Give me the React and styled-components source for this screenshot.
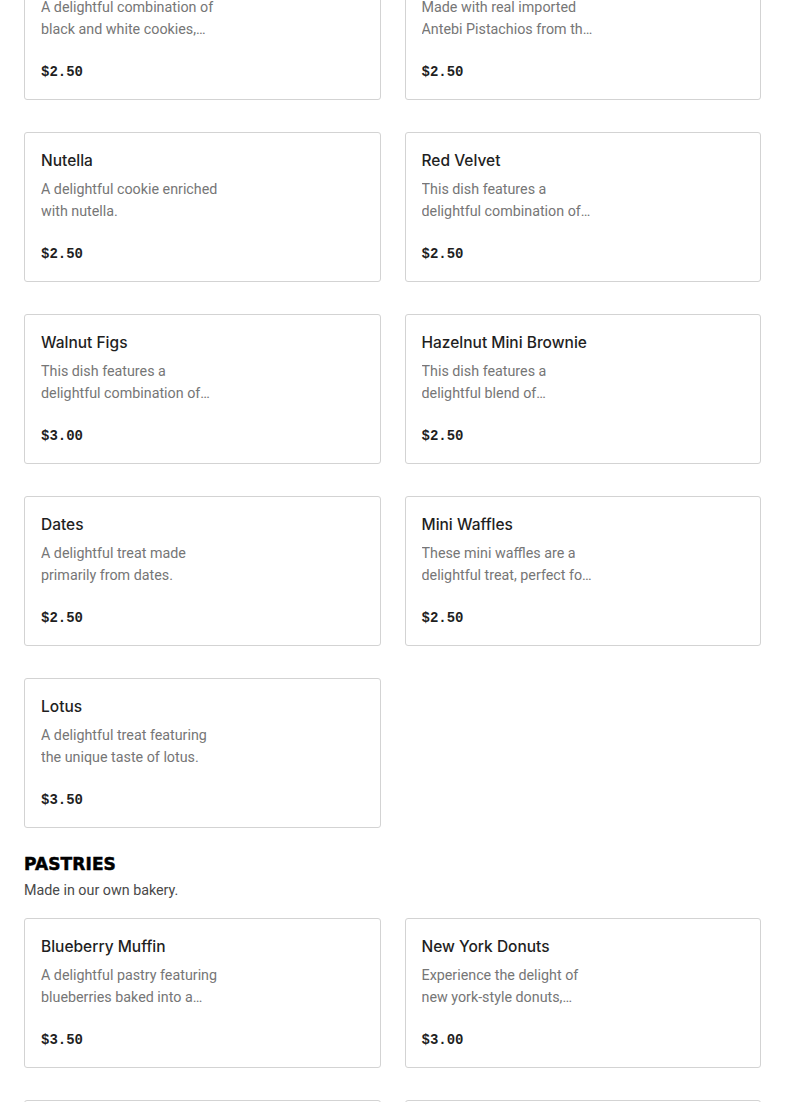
import React from 'react';
import styled, { createGlobalStyle } from 'styled-components';

const GlobalStyle = createGlobalStyle`
  body {
    margin: 0;
    background: #ffffff;
    font-family: Roboto, "Liberation Sans", sans-serif;
    overflow: hidden;
  }
`;

const Page = styled.div`
  padding: 0 24px;
  margin-top: -50px;
`;

const Grid = styled.div`
  display: grid;
  grid-template-columns: 1fr 1fr;
  column-gap: 24px;
  row-gap: 32px;
`;

const Section = styled.section`
  margin-top: ${(p) => p.gap || 0}px;
`;

const SectionTitle = styled.h2`
  margin: 0;
  font-family: "DejaVu Sans", sans-serif;
  font-weight: 700;
  font-size: 17px;
  line-height: 24px;
  color: #000;
  letter-spacing: 0.1px;
  -webkit-text-stroke: 0.5px #000;
`;

const SectionSub = styled.p`
  margin: 4px 0 18px;
  font-size: 14.3px;
  line-height: 20px;
  color: #494949;
`;

const Card = styled.div`
  box-sizing: border-box;
  height: 150px;
  border: 1px solid #d3d3d3;
  border-radius: 3px;
  padding: 16px 16px 17px;
  display: flex;
  flex-direction: column;
`;

const Title = styled.div`
  font-family: Inter, "Liberation Sans", sans-serif;
  font-size: 15.5px;
  line-height: 24px;
  font-weight: 500;
  color: #1f1f1f;
`;

const Desc = styled.div`
  margin-top: 5px;
  max-width: 180px;
  font-size: 14.3px;
  line-height: 22px;
  color: #767676;
  display: -webkit-box;
  -webkit-line-clamp: 2;
  -webkit-box-orient: vertical;
  overflow: hidden;
`;

const Price = styled.div`
  margin-top: auto;
  font-family: "Liberation Mono", monospace;
  font-weight: 700;
  font-size: 14px;
  line-height: 20px;
  color: #1f1f1f;
`;

const cookies = [
  { name: 'Black & White', desc: 'A delightful combination of black and white cookies,…', price: '$2.50' },
  { name: 'Pistachio', desc: 'Made with real imported Antebi Pistachios from th…', price: '$2.50' },
  { name: 'Nutella', desc: 'A delightful cookie enriched with nutella.', price: '$2.50' },
  { name: 'Red Velvet', desc: 'This dish features a delightful combination of…', price: '$2.50' },
  { name: 'Walnut Figs', desc: 'This dish features a delightful combination of…', price: '$3.00' },
  { name: 'Hazelnut Mini Brownie', desc: 'This dish features a delightful blend of…', price: '$2.50' },
  { name: 'Dates', desc: 'A delightful treat made primarily from dates.', price: '$2.50' },
  { name: 'Mini Waffles', desc: 'These mini waffles are a delightful treat, perfect fo…', price: '$2.50' },
  { name: 'Lotus', desc: 'A delightful treat featuring the unique taste of lotus.', price: '$3.50' },
];

const pastries = [
  { name: 'Blueberry Muffin', desc: 'A delightful pastry featuring blueberries baked into a…', price: '$3.50' },
  { name: 'New York Donuts', desc: 'Experience the delight of new york-style donuts,…', price: '$3.00' },
  { name: 'Croissant', desc: 'A buttery, flaky pastry baked fresh every morning.', price: '$3.00' },
  { name: 'Danish', desc: 'A sweet pastry with a fruit filling.', price: '$3.50' },
];

const ItemCard = ({ item }) => (
  <Card>
    <Title>{item.name}</Title>
    <Desc>{item.desc}</Desc>
    <Price>{item.price}</Price>
  </Card>
);

const App = () => {
  return (
    <React.Fragment>
      <GlobalStyle />
      <Page>
        <Grid>
          {cookies.map((c) => (
            <ItemCard key={c.name} item={c} />
          ))}
        </Grid>
        <Section gap={24}>
          <SectionTitle>PASTRIES</SectionTitle>
          <SectionSub>Made in our own bakery.</SectionSub>
          <Grid>
            {pastries.map((c) => (
              <ItemCard key={c.name} item={c} />
            ))}
          </Grid>
        </Section>
      </Page>
    </React.Fragment>
  );
};

export default App;
